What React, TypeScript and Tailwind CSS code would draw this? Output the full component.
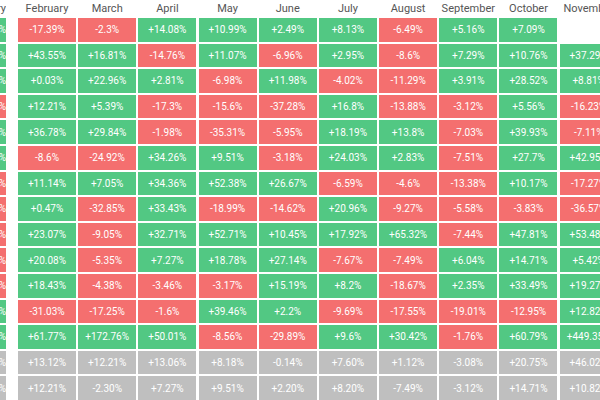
const months = ['January', 'February', 'March', 'April', 'May', 'June', 'July', 'August', 'September', 'October', 'November'];

const rows: (string | null)[][] = [
  ['+9.29%', '-17.39%', '-2.3%', '+14.08%', '+10.99%', '+2.49%', '+8.13%', '-6.49%', '+5.16%', '+7.09%', null],
  ['+0.62%', '+43.55%', '+16.81%', '-14.76%', '+11.07%', '-6.96%', '+2.95%', '-8.6%', '+7.29%', '+10.76%', '+37.29%'],
  ['+39.63%', '+0.03%', '+22.96%', '+2.81%', '-6.98%', '+11.98%', '-4.02%', '-11.29%', '+3.91%', '+28.52%', '+8.81%'],
  ['-16.68%', '+12.21%', '+5.39%', '-17.3%', '-15.6%', '-37.28%', '+16.8%', '-13.88%', '-3.12%', '+5.56%', '-16.23%'],
  ['+14.51%', '+36.78%', '+29.84%', '-1.98%', '-35.31%', '-5.95%', '+18.19%', '+13.8%', '-7.03%', '+39.93%', '-7.11%'],
  ['+29.95%', '-8.6%', '-24.92%', '+34.26%', '+9.51%', '-3.18%', '+24.03%', '+2.83%', '-7.51%', '+27.7%', '+42.95%'],
  ['-8.58%', '+11.14%', '+7.05%', '+34.36%', '+52.38%', '+26.67%', '-6.59%', '-4.6%', '-13.38%', '+10.17%', '-17.27%'],
  ['-25.41%', '+0.47%', '-32.85%', '+33.43%', '-18.99%', '-14.62%', '+20.96%', '-9.27%', '-5.58%', '-3.83%', '-36.57%'],
  ['-0.04%', '+23.07%', '-9.05%', '+32.71%', '+52.71%', '+10.45%', '+17.92%', '+65.32%', '-7.44%', '+47.81%', '+53.48%'],
  ['-14.83%', '+20.08%', '-5.35%', '+7.27%', '+18.78%', '+27.14%', '-7.67%', '-7.49%', '+6.04%', '+14.71%', '+5.42%'],
  ['-33.05%', '+18.43%', '-4.38%', '-3.46%', '-3.17%', '+15.19%', '+8.2%', '-18.67%', '+2.35%', '+33.49%', '+19.27%'],
  ['+10.03%', '-31.03%', '-17.25%', '-1.6%', '+39.46%', '+2.2%', '-9.69%', '-17.55%', '-19.01%', '-12.95%', '+12.82%'],
  ['+44.05%', '+61.77%', '+172.76%', '+50.01%', '-8.56%', '-29.89%', '+9.6%', '+30.42%', '-1.76%', '+60.79%', '+449.35%'],
];

const summary: string[][] = [
  ['+3.81%', '+13.12%', '+12.21%', '+13.06%', '+8.18%', '-0.14%', '+7.60%', '+1.12%', '-3.08%', '+20.75%', '+46.02%'],
  ['+0.62%', '+12.21%', '-2.30%', '+7.27%', '+9.51%', '+2.20%', '+8.20%', '-7.49%', '-3.12%', '+14.71%', '+10.82%'],
];

const gridCols = 'grid grid-cols-[15.8px_repeat(10,58px)] gap-x-[2.2px]';

function Cell({ value, gray, first }: { value: string | null; gray?: boolean; first?: boolean }) {
  if (value === null) return <div />;
  const bg = gray ? 'bg-[#bfbfbf]' : value.startsWith('-') ? 'bg-[#f46f6f]' : 'bg-[#52c883]';
  if (first) {
    return (
      <div className={`w-[6px] h-full overflow-hidden flex items-center justify-end ${bg}`}>
        <span className="whitespace-nowrap text-white text-[10px]">{value}</span>
      </div>
    );
  }
  return (
    <div className={`h-full flex items-center justify-center ${bg}`}>
      <span className="whitespace-nowrap text-white text-[10px]">{value}</span>
    </div>
  );
}

export default function App() {
  return (
    <div className="w-[600px] h-[400px] overflow-hidden bg-white font-['Roboto',sans-serif]">
      <div className="flex flex-col gap-y-[2px] w-[700px]">
        {/* Month header */}
        <div className={`${gridCols} h-[16px]`}>
          {months.map((m, i) => (
            <div
              key={m}
              className={`flex items-center overflow-hidden ${i === 0 ? 'justify-end w-[6px]' : 'justify-center'}`}
            >
              <span className="whitespace-nowrap text-[11px] leading-none text-[#555]">{m}</span>
            </div>
          ))}
        </div>

        {rows.map((r, ri) => (
          <div key={ri} className={`${gridCols} h-[23.6px]`}>
            {r.map((v, ci) => (
              <Cell key={ci} value={v} first={ci === 0} />
            ))}
          </div>
        ))}

        {summary.map((r, ri) => (
          <div key={`s${ri}`} className={`${gridCols} h-[23.6px]`}>
            {r.map((v, ci) => (
              <Cell key={ci} value={v} gray first={ci === 0} />
            ))}
          </div>
        ))}
      </div>
    </div>
  );
}
